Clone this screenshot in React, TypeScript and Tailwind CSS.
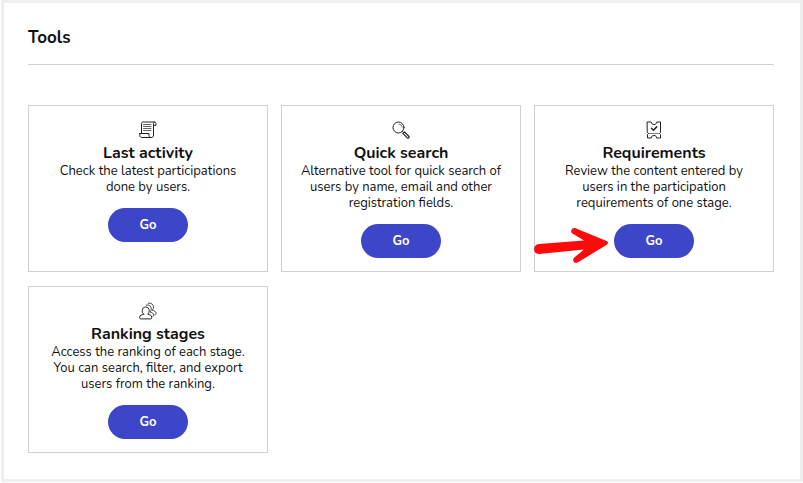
import type { ReactNode } from "react";

type Tool = {
  title: string;
  description: string;
  href: string;
  icon: ReactNode;
  highlighted?: boolean;
};

const iconProps = {
  viewBox: "0 0 18 18",
  fill: "none",
  stroke: "#222222",
  strokeLinecap: "round" as const,
  strokeLinejoin: "round" as const,
  className: "h-[18px] w-[18px]",
  "aria-hidden": true,
};

function ScrollIcon() {
  return (
    <svg {...iconProps}>
      <path d="M2.500 12.500v-10c0-1 .6-1.500 1.500-1.500h11.500c1 0 1.500.7 1.500 1.500v1.800h-2.500" />
      <path d="M14.500 14.500v-12c0-1 .4-1.500 1-1.500" />
      <path d="M.8 12.500h9.200v2c0 1.300.9 2 2.200 2s2.300-.8 2.300-2M.8 12.500v2c0 1.300.8 2 2 2h9.400" />
      <path d="M4.500 3.500h7.500M4.500 5.500h7.500M4.500 7.500h7.500M4.500 9.500h7.500" strokeWidth="0.7" />
    </svg>
  );
}

function SearchIcon() {
  return (
    <svg {...iconProps}>
      <circle cx="6.500" cy="6.500" r="5.500" />
      <path d="M6.800 3.100c1.900 0 3.200 1.300 3.300 3.100" strokeWidth="0.6" />
      <path d="m10.500 10.500 1.200 1.200" />
      <path d="m10.900 12.400 1.500-1.500 4.400 4.300c1 1-.6 2.500-1.500 1.600z" strokeWidth="1.200" />
    </svg>
  );
}

function TicketIcon() {
  return (
    <svg {...iconProps}>
      <path d="M2.500 1h3.700c.2 1.600 1.200 2.500 2.800 2.500s2.600-.9 2.800-2.500h3.700v10.500l-1 1 1 1V17h-3.700c-.2-1.600-1.200-2.500-2.800-2.500s-2.600.9-2.800 2.500H2.500v-3.500l1-1-1-1z" />
      <path d="M4 12.500h10" strokeWidth="0.6" />
      <path d="m6.500 7.300 1.900 1.900 3.300-3.300" strokeWidth="1.500" />
    </svg>
  );
}

function UsersIcon() {
  return (
    <svg {...iconProps}>
      <path d="M4.700 12.200c-1-.9-1.500-2.100-1.500-3.400C3.200 6.500 4.600 5 6.700 5s3.500 1.500 3.500 3.800c0 1.300-.5 2.500-1.500 3.400 2 .5 4 1 4 2.900v.8c0 .6-.4 1-1 1H1.700c-.6 0-1-.4-1-1v-.8c0-1.900 2-2.400 4-2.900z" />
      <path d="M7.300 3c2.700-.6 5 1.100 5 3.900 0 1.200-.4 2.300-1.200 3.200 2 .5 3.700 1.200 3.700 3.100 0 .7-.4 1.100-1 1.100" strokeWidth="0.8" />
      <path d="M9.300 1.200c2.800-.6 5.200 1.100 5.200 3.900 0 1.200-.4 2.300-1.200 3.200 2 .5 3.900 1.200 3.900 3.100 0 .7-.5 1.100-1.100 1.100" strokeWidth="0.8" />
    </svg>
  );
}

const tools: Tool[] = [
  {
    title: "Last activity",
    description: "Check the latest participations done by users.",
    href: "#last-activity",
    icon: <ScrollIcon />,
  },
  {
    title: "Quick search",
    description:
      "Alternative tool for quick search of users by name, email and other registration fields.",
    href: "#quick-search",
    icon: <SearchIcon />,
  },
  {
    title: "Requirements",
    description:
      "Review the content entered by users in the participation requirements of one stage.",
    href: "#requirements",
    icon: <TicketIcon />,
    highlighted: true,
  },
  {
    title: "Ranking stages",
    description:
      "Access the ranking of each stage. You can search, filter, and export users from the ranking.",
    href: "#ranking-stages",
    icon: <UsersIcon />,
  },
];

function PointerArrow() {
  return (
    <svg
      viewBox="0 0 76 44"
      className="absolute top-1/2 right-full mr-1 h-11 w-[76px] -translate-y-1/2"
      fill="#ff0a0a"
      aria-hidden="true"
    >
      <path d="M5 25 50 21.500 38.500 14.500C35.500 12.500 38 8 41.500 9.300L72.500 22c2 .8 2 2.700.2 3.700L44 43.300c-3.500 2-6.300-1.700-4-4.500L50 30.500 5 35c-6.500.3-6.500-9.500 0-10z" />
    </svg>
  );
}

function ToolCard({ tool }: { tool: Tool }) {
  return (
    <article className="flex flex-col items-center border border-[#d0d0d0] px-4 pt-[15px] pb-[13px] text-center">
      {tool.icon}
      <h2 className="mt-1 text-base leading-5 font-bold">{tool.title}</h2>
      <p className="text-[13px] leading-4">{tool.description}</p>
      <div className="relative mt-[13px]">
        {tool.highlighted && <PointerArrow />}
        <a
          href={tool.href}
          className="block w-20 rounded-full bg-[#3d45c9] text-center text-[13px] leading-[34px] font-bold text-white hover:bg-[#3037a8]"
        >
          Go
        </a>
      </div>
    </article>
  );
}

export default function App() {
  return (
    <main className="mb-px ml-px border-3 border-[#eeeeee] bg-white pt-6 pr-[26px] pb-[26px] pl-6 font-['Nunito','Open_Sans',sans-serif] text-[#111111]">
      <h1 className="border-b border-[#d0d0d0] pb-[15px] text-[17px] leading-[22px] font-bold">
        Tools
      </h1>
      <section className="mt-10 grid grid-cols-3 gap-x-[13px] gap-y-[14px]">
        {tools.map((tool) => (
          <ToolCard key={tool.title} tool={tool} />
        ))}
      </section>
    </main>
  );
}
